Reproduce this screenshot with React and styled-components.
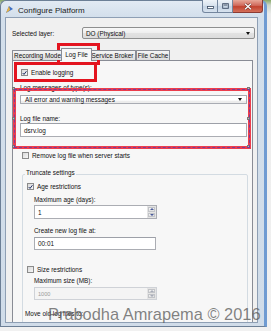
import React from 'react'
import styled, { createGlobalStyle } from 'styled-components'

const GlobalStyle = createGlobalStyle`
  html, body {
    margin: 0;
    padding: 0;
    background: #f2f2f2;
  }
  body {
    font-family: "Liberation Sans", Arial, sans-serif;
    font-size: 6.4px;
    color: #111;
  }
  * {
    box-sizing: border-box;
  }
`

const Screen = styled.div`
  position: relative;
  width: 271px;
  height: 331px;
  overflow: hidden;
  background: linear-gradient(180deg, #86a866 0, #cbd5c6 5px, #ececec 14px, #f1f1f1 100%);
`

const Window = styled.div`
  width: 267px;
  height: 327px;
  display: flex;
  flex-direction: column;
  padding: 0 6px 3px 4px;
  border: 1px solid #6c7f96;
  border-right: 3px solid #6f9bd2;
  border-radius: 6px 6px 0 0;
  background: linear-gradient(180deg, #e2eaf3 0, #d3dfeb 16px, #d0dce9 100%);
`

const TitleBar = styled.div`
  height: 16px;
  flex: none;
  display: flex;
  align-items: flex-start;
  margin-right: -5px;
`

const TitleIcon = styled.svg`
  width: 9px;
  height: 9px;
  margin-top: 4px;
  flex: none;
`

const TitleText = styled.span`
  margin: 5px 0 0 4px;
  font-size: 8px;
  line-height: 9px;
  color: #1a1a1a;
`

const Controls = styled.div`
  margin: -1px 0 0 auto;
  display: flex;
`

const CtrlButton = styled.div`
  width: ${p => p.$w}px;
  height: 13px;
  display: flex;
  align-items: center;
  justify-content: center;
  border: 1px solid ${p => (p.$close ? '#8c3b33' : '#74869e')};
  border-top: none;
  border-left-width: ${p => (p.$first ? 1 : 0)}px;
  border-radius: ${p => (p.$first ? '0 0 0 3px' : p.$close ? '0 0 3px 0' : '0')};
  background: ${p =>
    p.$close
      ? 'linear-gradient(180deg, #e8a899 0, #d06a5c 45%, #c2422f 55%, #d4705a 100%)'
      : 'linear-gradient(180deg, #eef3f8 0, #d9e3ee 45%, #c6d4e4 55%, #d7e2ee 100%)'};
`

const Client = styled.div`
  flex: 1;
  min-height: 0;
  display: flex;
  flex-direction: column;
  overflow: hidden;
  padding-right: 2px;
  background: #f0f0f0;
  border: 1px solid #8e9fb4;
`

const LayerRow = styled.div`
  display: flex;
  align-items: center;
  height: 12px;
  margin-top: 9px;
  padding-left: 6px;
`

const LayerLabel = styled.span`
  width: 70px;
  flex: none;
`

const Combo = styled.div`
  flex: 1;
  height: ${p => p.$h || 12}px;
  margin-top: ${p => p.$mt || 0}px;
  display: flex;
  align-items: center;
  padding: 0 4px 0 ${p => p.$pl || 3}px;
  border: 1px solid ${p => (p.$flat ? '#a9acb3' : '#8e8f8f')};
  border-radius: ${p => (p.$flat ? 0 : 2)}px;
  background: ${p =>
    p.$flat
      ? 'linear-gradient(180deg, #ffffff 0, #ffffff 62%, #ececec 70%, #ececec 100%)'
      : 'linear-gradient(180deg, #f8f8f8 0, #eeeeee 50%, #e2e2e2 51%, #dcdcdc 100%)'};
  flex-grow: ${p => (p.$flat ? 0 : 1)};
`

const ComboText = styled.span`
  flex: 1;
  white-space: nowrap;
`

const Arrow = styled.span`
  width: 0;
  height: 0;
  border-left: 2.5px solid transparent;
  border-right: 2.5px solid transparent;
  border-top: 3px solid #111;
`

const TabStrip = styled.div`
  display: flex;
  align-items: flex-end;
  height: 12px;
  margin: 9px 4px 0 6px;
  flex: none;
`

const Tab = styled.div`
  width: ${p => p.$w}px;
  height: ${p => (p.$active ? 13 : 10)}px;
  line-height: ${p => (p.$active ? 12 : 10)}px;
  margin: 0 ${p => (p.$active ? -2 : 0)}px ${p => (p.$active ? -1 : 0)}px;
  position: relative;
  z-index: ${p => (p.$active ? 2 : 1)};
  text-align: center;
  white-space: nowrap;
  overflow: hidden;
  border: 1px solid #898c95;
  border-bottom: none;
  border-left-width: ${p => (p.$noLeft ? 0 : 1)}px;
  border-radius: 1px 1px 0 0;
  background: ${p =>
    p.$active ? '#f7f7f7' : 'linear-gradient(180deg, #f4f4f4 0, #e9e9e9 50%, #dcdcdc 100%)'};
`

const Panel = styled.div`
  flex: 1;
  margin: 0 2px 0 6px;
  padding: 7px 5px 0 7px;
  display: flex;
  flex-direction: column;
  border: 1px solid #898c95;
  background: #f7f7f7;
`

const CheckRow = styled.div`
  display: flex;
  align-items: center;
  height: 9px;
  margin-top: ${p => p.$mt || 0}px;
  margin-left: ${p => p.$ml || 0}px;
  white-space: nowrap;
`

const Box = styled.span`
  width: 7px;
  height: 7px;
  flex: none;
  margin-right: 3px;
  display: inline-flex;
  align-items: center;
  justify-content: center;
  border: 1px solid #8b8b8b;
  background: linear-gradient(135deg, #d9d9d9 0, #f7f7f7 100%);
`

const FieldLabel = styled.div`
  height: 9px;
  line-height: 9px;
  white-space: nowrap;
  margin-top: ${p => p.$mt || 0}px;
  margin-left: ${p => p.$ml || 0}px;
`

const TextBox = styled.div`
  height: ${p => p.$h}px;
  width: ${p => (p.$w ? `${p.$w}px` : 'auto')};
  margin-top: ${p => p.$mt || 0}px;
  display: flex;
  align-items: center;
  padding-left: 3px;
  border: 1px solid #abadb3;
  border-top-color: #9da0a8;
  background: #fff;
`

const Spinner = styled.div`
  width: 123px;
  height: ${p => p.$h}px;
  margin-top: ${p => p.$mt || 0}px;
  display: flex;
  border: 1px solid ${p => (p.$disabled ? '#cfd2d7' : '#abadb3')};
  background: ${p => (p.$disabled ? '#f4f4f4' : '#fff')};
  color: ${p => (p.$disabled ? '#9a9a9a' : '#111')};
  font-size: ${p => (p.$disabled ? 5.6 : 6.4)}px;
`

const SpinValue = styled.span`
  flex: 1;
  display: flex;
  align-items: center;
  padding-left: 3px;
`

const SpinColumn = styled.div`
  width: 9px;
  display: flex;
  flex-direction: column;
  gap: 1px;
  padding: 1px;
  background: #e4e4e4;
`

const SpinButton = styled.div`
  flex: 1;
  display: flex;
  align-items: center;
  justify-content: center;
  border: 1px solid #c2c4c8;
  background: linear-gradient(180deg, #f6f6f6, #e0e0e0);
`

const GroupBox = styled.fieldset`
  margin: 8px -1px 0 2px;
  padding: 0 0 8px 4px;
  min-width: 0;
  border: 1px solid #d3dbe2;
  border-radius: 2px;
  display: flex;
  flex-direction: column;
`

const Legend = styled.legend`
  margin-left: -2px;
  padding: 0 1px 4px;
  line-height: 9px;
`

const Indent = styled.div`
  margin-left: 7px;
  display: flex;
  flex-direction: column;
`

const Overlay = styled.div`
  position: absolute;
  left: ${p => p.$x}px;
  top: ${p => p.$y}px;
  width: ${p => p.$w}px;
  height: ${p => p.$h}px;
  border: 3px solid #e3141f;
  pointer-events: none;
`

const DashedOverlay = styled(Overlay)`
  border-color: #ec3e4d;

  &::after {
    content: '';
    position: absolute;
    inset: -2px;
    border: 1px dashed #7b3c9a;
  }
`

const Handle = styled.span`
  position: absolute;
  width: 3px;
  height: 3px;
  left: ${p => p.$x}px;
  top: ${p => p.$y}px;
  background: #b9b9b9;
  border: 0.5px solid #777;
`

const Watermark = styled.div`
  position: absolute;
  left: 48px;
  top: 305px;
  font-size: 16.4px;
  line-height: 18px;
  white-space: nowrap;
  color: rgba(95, 95, 95, 0.78);
  pointer-events: none;
`

function Check({ checked }) {
  return (
    <Box>
      {checked && (
        <svg width="6" height="6" viewBox="0 0 6 6">
          <path d="M0.8 3 L2.4 4.7 L5.3 0.9" fill="none" stroke="#1d2c63" strokeWidth="1.2" />
        </svg>
      )}
    </Box>
  )
}

function SpinBox({ value, h, mt, disabled }) {
  const arrowColor = disabled ? '#a8acb8' : '#4a5a9a'
  return (
    <Spinner $h={h} $mt={mt} $disabled={disabled}>
      <SpinValue>{value}</SpinValue>
      <SpinColumn>
        <SpinButton>
          <svg width="4" height="2" viewBox="0 0 4 2">
            <path d="M0 2 L2 0 L4 2 Z" fill={arrowColor} />
          </svg>
        </SpinButton>
        <SpinButton>
          <svg width="4" height="2" viewBox="0 0 4 2">
            <path d="M0 0 L2 2 L4 0 Z" fill={arrowColor} />
          </svg>
        </SpinButton>
      </SpinColumn>
    </Spinner>
  )
}

const tabs = [
  { label: 'Recording Mode', w: 51 },
  { label: 'Log File', w: 31, active: true },
  { label: 'Service Broker', w: 46, noLeft: true },
  { label: 'File Cache', w: 34 },
]

export default function App() {
  return (
    <Screen>
      <GlobalStyle />
      <Window>
        <TitleBar>
          <TitleIcon viewBox="0 0 9 9">
            <path d="M1 8 L4 1 L8 4 Z" fill="#3d6fc4" />
            <path d="M1 8 L4 1 L5 5 Z" fill="#f0b43a" />
          </TitleIcon>
          <TitleText>Configure Platform</TitleText>
          <Controls>
            <CtrlButton $w={16} $first>
              <svg width="7" height="6" viewBox="0 0 7 6">
                <rect x="0.5" y="3.5" width="6" height="2" fill="#fff" stroke="#3a4a62" strokeWidth="0.8" />
              </svg>
            </CtrlButton>
            <CtrlButton $w={15}>
              <svg width="7" height="6" viewBox="0 0 7 6">
                <rect x="0.7" y="0.7" width="5.6" height="4.6" fill="none" stroke="#3a4a62" strokeWidth="0.9" />
                <rect x="1.6" y="1.6" width="3.8" height="0.9" fill="#3a4a62" />
              </svg>
            </CtrlButton>
            <CtrlButton $w={30} $close>
              <svg width="8" height="7" viewBox="0 0 8 7">
                <path d="M1 0.8 L7 6.2 M7 0.8 L1 6.2" stroke="#6a2a22" strokeWidth="2.4" />
                <path d="M1 0.8 L7 6.2 M7 0.8 L1 6.2" stroke="#fff" strokeWidth="1.3" />
              </svg>
            </CtrlButton>
          </Controls>
        </TitleBar>

        <Client>
          <LayerRow>
            <LayerLabel>Selected layer:</LayerLabel>
            <Combo>
              <ComboText>DO (Physical)</ComboText>
              <Arrow />
            </Combo>
          </LayerRow>

          <TabStrip>
            {tabs.map(t => (
              <Tab key={t.label} $w={t.w} $active={t.active} $noLeft={t.noLeft}>
                {t.label}
              </Tab>
            ))}
          </TabStrip>

          <Panel>
            <CheckRow $mt={0} $ml={1}>
              <Check checked />
              Enable logging
            </CheckRow>
            <FieldLabel $mt={6}>Log messages of type(s):</FieldLabel>
            <Combo $flat $mt={3} $pl={4}>
              <ComboText>All error and warning messages</ComboText>
              <Arrow />
            </Combo>
            <FieldLabel $mt={10}>Log file name:</FieldLabel>
            <TextBox $h={14} $mt={0}>dsrv.log</TextBox>
            <CheckRow $mt={14} $ml={2}>
              <Check />
              Remove log file when server starts
            </CheckRow>

            <GroupBox>
              <Legend>Truncate settings</Legend>
              <CheckRow $mt={1}>
                <Check checked />
                Age restrictions
              </CheckRow>
              <Indent>
                <FieldLabel $mt={4}>Maximum age (days):</FieldLabel>
                <SpinBox value="1" h={14} mt={1} />
                <FieldLabel $mt={7}>Create new log file at:</FieldLabel>
                <TextBox $h={13} $w={122} $mt={2}>00:01</TextBox>
              </Indent>
              <CheckRow $mt={15}>
                <Check />
                Size restrictions
              </CheckRow>
              <Indent>
                <FieldLabel $mt={2}>Maximum size (MB):</FieldLabel>
                <SpinBox value="1000" h={13} mt={2} disabled />
              </Indent>
              <FieldLabel $mt={9} $ml={-2}>Move old log files to:</FieldLabel>
            </GroupBox>
          </Panel>
        </Client>
      </Window>

      <Overlay $x={57} $y={43} $w={43} $h={22} />
      <Overlay $x={14} $y={62} $w={83} $h={20} />
      <DashedOverlay $x={13} $y={88} $w={238} $h={61}>
        <Handle $x={-4} $y={-4} />
        <Handle $x={231} $y={-4} />
        <Handle $x={-4} $y={26} />
        <Handle $x={231} $y={26} />
        <Handle $x={-4} $y={54} />
        <Handle $x={231} $y={54} />
      </DashedOverlay>
      <Watermark>Prabodha Amrapema © 2016</Watermark>
    </Screen>
  )
}
